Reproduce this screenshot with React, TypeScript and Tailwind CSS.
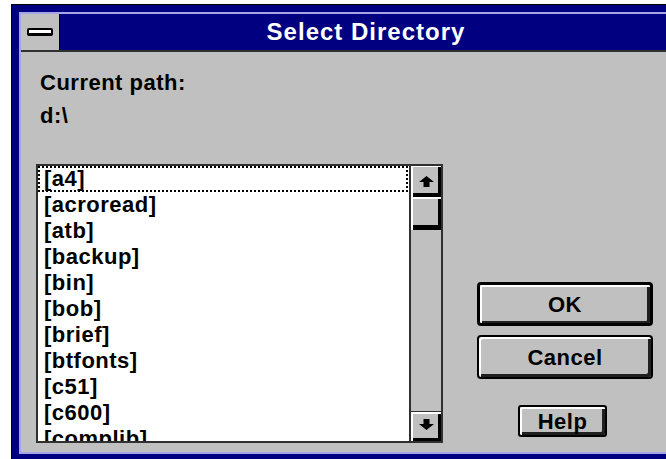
import React from "react";

const folders = [
  "[a4]",
  "[acroread]",
  "[atb]",
  "[backup]",
  "[bin]",
  "[bob]",
  "[brief]",
  "[btfonts]",
  "[c51]",
  "[c600]",
  "[complib]",
];

const font = "font-['Liberation_Sans',Arial,sans-serif] font-bold";

function Arrow({ down = false }: { down?: boolean }) {
  return (
    <svg width="15" height="11" viewBox="0 0 15 11" className={down ? "rotate-180" : ""}>
      <polygon points="7.5,0 15,6 10.5,6 10.5,11 4.5,11 4.5,6 0,6" fill="#000" />
    </svg>
  );
}

function FocusRect() {
  const h = "bg-[repeating-linear-gradient(90deg,#000_0px,#000_2px,transparent_2px,transparent_4px)]";
  const v = "bg-[repeating-linear-gradient(180deg,#000_0px,#000_2px,transparent_2px,transparent_4px)]";
  return (
    <>
      <div className={`absolute left-0 right-[1px] top-0 h-[2px] ${h}`} />
      <div className={`absolute left-0 right-[1px] bottom-0 h-[2px] ${h}`} />
      <div className={`absolute left-0 top-0 bottom-0 w-[2px] ${v}`} />
      <div className={`absolute right-[1px] top-0 bottom-0 w-[2px] ${v}`} />
    </>
  );
}

export default function App() {
  return (
    <div className={`w-[666px] h-[459px] overflow-hidden bg-white ${font}`}>
      {/* window frame */}
      <div className="ml-[11px] mt-[4px] w-[720px] h-[470px] border-t border-l border-black bg-[#000080] pt-[7px] pl-[7px]">
        <div className="w-[700px] border-t-2 border-l-2 border-b-2 border-[#a4a4e8]">
          {/* title bar */}
          <div className="flex h-[38px] border-b-2 border-[#303030]">
            <div className="w-[39px] h-full bg-[#c0c0c0] border-r border-black flex items-center justify-center">
              <div className="w-[26px] h-[8px] bg-white border-2 border-b-[3px] border-black rounded-[2px]" />
            </div>
            <div className="flex-1 bg-[#000080] flex items-center justify-center pr-[47px]">
              <span className="text-white text-[24px] leading-none tracking-[1px]">Select Directory</span>
            </div>
          </div>

          {/* client area */}
          <div className="flex h-[400px] bg-[#c0c0c0] text-black">
            <div className="pl-[15px]">
              <div className="pl-[4px] pt-[14px] text-[22px] leading-[33px] tracking-[0.5px]">
                <div>Current path:</div>
                <div>d:\</div>
              </div>

              {/* directory list */}
              <div className="mt-[32px] w-[407px] h-[279px] border-2 border-[#303030] flex">
                <div className="flex-1 bg-white overflow-hidden">
                  {folders.map((f, i) => (
                    <div
                      key={f}
                      className="relative h-[26px] pl-[6px] text-[22px] leading-[26px] tracking-[0.5px] whitespace-nowrap"
                    >
                      {i === 0 && <FocusRect />}
                      {f}
                    </div>
                  ))}
                </div>
                <div className="w-[32px] border-l-2 border-[#303030] flex flex-col bg-[#c0c0c0]">
                  <div className="h-[31px] flex items-center justify-center shadow-[inset_2px_1px_0_#fff,inset_-3px_-4px_0_#000]">
                    <Arrow />
                  </div>
                  <div className="h-[33px] shadow-[inset_2px_2px_0_#fff,inset_-3px_-5px_0_#000]" />
                  <div className="flex-1" />
                  <div className="h-[30px] pt-[7px] flex justify-center border-t border-[#303030] shadow-[inset_2px_2px_0_#fff,inset_-3px_-3px_0_#000]">
                    <Arrow down />
                  </div>
                </div>
              </div>
            </div>

            {/* buttons */}
            <div className="ml-[34px] w-[176px] pt-[230px] flex flex-col text-[22px] tracking-[0.5px]">
              <div className="h-[44px] rounded-[4px] border-[3px] border-black shadow-[inset_2px_2px_0_#fff,inset_-3px_-2px_0_#202020] flex items-center justify-center">
                OK
              </div>
              <div className="mt-[9px] h-[44px] rounded-[4px] border-2 border-black shadow-[inset_2px_2px_0_#fff,inset_-3px_-3px_0_#202020] flex items-center justify-center">
                Cancel
              </div>
              <div className="mt-[26px] ml-[41px] w-[89px] h-[32px] rounded-[3px] border-2 border-black shadow-[inset_2px_2px_0_#fff,inset_-3px_-3px_0_#202020] flex items-center justify-center">
                Help
              </div>
            </div>
          </div>
        </div>
      </div>
    </div>
  );
}
